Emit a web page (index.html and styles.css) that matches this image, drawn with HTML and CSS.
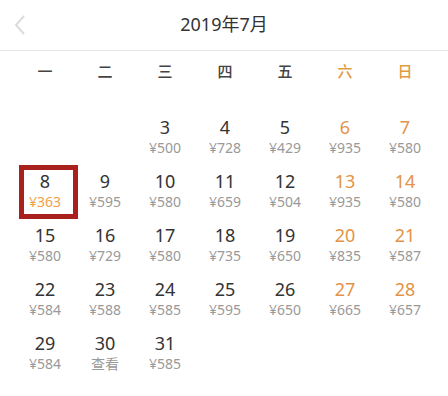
FILE: index.html
```html
<!DOCTYPE html>
<html lang="zh">
<head>
<meta charset="utf-8">
<link rel="stylesheet" href="styles.css">
</head>
<body>
<div class="cal">
  <header class="head">
    <span class="back"><svg width="14" height="22" viewBox="0 0 14 22"><polyline points="11,2 3,11 11,20" fill="none" stroke="#dcdcdc" stroke-width="2"/></svg></span>
    <h1 class="title">2019年7月</h1>
  </header>
  <div class="week">
    <span>一</span><span>二</span><span>三</span><span>四</span><span>五</span><span class="we">六</span><span class="we">日</span>
  </div>
  <div class="grid">
    <div class="cell empty"></div><div class="cell empty"></div>
    <div class="cell"><b>3</b><i>¥500</i></div>
    <div class="cell"><b>4</b><i>¥728</i></div>
    <div class="cell"><b>5</b><i>¥429</i></div>
    <div class="cell we"><b>6</b><i>¥935</i></div>
    <div class="cell we"><b>7</b><i>¥580</i></div>

    <div class="cell sel"><b>8</b><i>¥363</i></div>
    <div class="cell"><b>9</b><i>¥595</i></div>
    <div class="cell"><b>10</b><i>¥580</i></div>
    <div class="cell"><b>11</b><i>¥659</i></div>
    <div class="cell"><b>12</b><i>¥504</i></div>
    <div class="cell we"><b>13</b><i>¥935</i></div>
    <div class="cell we"><b>14</b><i>¥580</i></div>

    <div class="cell"><b>15</b><i>¥580</i></div>
    <div class="cell"><b>16</b><i>¥729</i></div>
    <div class="cell"><b>17</b><i>¥580</i></div>
    <div class="cell"><b>18</b><i>¥735</i></div>
    <div class="cell"><b>19</b><i>¥650</i></div>
    <div class="cell we"><b>20</b><i>¥835</i></div>
    <div class="cell we"><b>21</b><i>¥587</i></div>

    <div class="cell"><b>22</b><i>¥584</i></div>
    <div class="cell"><b>23</b><i>¥588</i></div>
    <div class="cell"><b>24</b><i>¥585</i></div>
    <div class="cell"><b>25</b><i>¥595</i></div>
    <div class="cell"><b>26</b><i>¥650</i></div>
    <div class="cell we"><b>27</b><i>¥665</i></div>
    <div class="cell we"><b>28</b><i>¥657</i></div>

    <div class="cell"><b>29</b><i>¥584</i></div>
    <div class="cell"><b>30</b><i>查看</i></div>
    <div class="cell"><b>31</b><i>¥585</i></div>
  </div>
</div>
</body>
</html>
```
FILE: styles.css
```css
* { box-sizing: border-box; margin: 0; padding: 0; }
body {
  background: #fff;
  font-family: "Noto Sans", "Noto Sans CJK SC", sans-serif;
  color: #333;
}
.cal { width: 448px; }
.head {
  height: 51px;
  border-bottom: 1px solid #e6e6e6;
  display: flex;
  align-items: center;
  justify-content: center;
  position: relative;
}
.back {
  position: absolute;
  left: 13px;
  top: 14px;
  display: flex;
}
.title {
  font-weight: 400;
  font-size: 18px;
  color: #333;
  line-height: 24px;
  margin-top: -2px;
}
.week {
  display: grid;
  grid-template-columns: repeat(7, 60px);
  padding: 0 15px;
  height: 40px;
  align-items: center;
  font-size: 15px;
  font-weight: 500;
  color: #444;
}
.week span { text-align: center; line-height: 20px; }
.week .we { color: #e29a42; }
.grid {
  display: grid;
  grid-template-columns: repeat(7, 60px);
  grid-auto-rows: 52px;
  row-gap: 2px;
  padding: 21px 15px 0;
}
.cell {
  display: flex;
  flex-direction: column;
  align-items: center;
  padding-top: 4px;
  position: relative;
}
.cell b {
  font-weight: 400;
  font-size: 18px;
  line-height: 22px;
  color: #333;
}
.cell i {
  font-style: normal;
  font-size: 14px;
  line-height: 19px;
  color: #999;
}
.cell.we b { color: #e39347; }
.cell.sel::after {
  content: "";
  position: absolute;
  left: 4px;
  right: -3px;
  top: -1px;
  bottom: -1px;
  border: 5px solid #a8211c;
}
.cell.sel i { color: #eea146; }
```
